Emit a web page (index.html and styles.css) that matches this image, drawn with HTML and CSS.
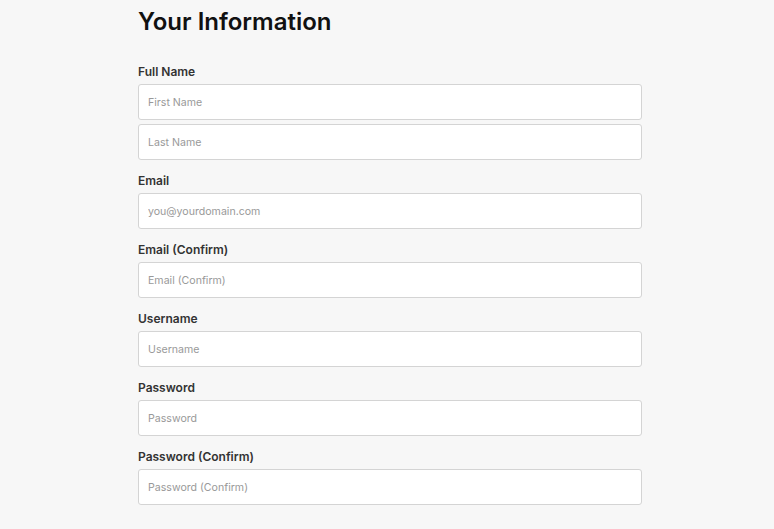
FILE: index.html
```
<!DOCTYPE html>
<html lang="en">
<head>
    <meta charset="UTF-8">
    <meta name="viewport" content="width=device-width, initial-scale=1.0">
    <title>Your Information</title>
    <link rel="stylesheet" href="styles.css">
</head>
<body>
    <div class="container">
        <h1>Your Information</h1>

        <div class="field">
            <label>Full Name</label>
            <input type="text" placeholder="First Name">
            <input type="text" placeholder="Last Name">
        </div>

        <div class="field">
            <label>Email</label>
            <input type="email" placeholder="you@yourdomain.com">
        </div>

        <div class="field">
            <label>Email (Confirm)</label>
            <input type="email" placeholder="Email (Confirm)">
        </div>

        <div class="field">
            <label>Username</label>
            <input type="text" placeholder="Username">
        </div>

        <div class="field">
            <label>Password</label>
            <input type="password" placeholder="Password">
        </div>

        <div class="field">
            <label>Password (Confirm)</label>
            <input type="password" placeholder="Password (Confirm)">
        </div>
    </div>
</body>
</html>
```

FILE: styles.css
```
body {
    margin: 0;
    background: #f7f7f7;
    font-family: Inter, "Noto Sans", sans-serif;
    color: #222;
}
.container {
    width: 504px;
    margin-left: 138px;
    padding-top: 7px;
}
h1 {
    margin: 0 0 26px;
    font-size: 24px;
    line-height: 30px;
    font-weight: 600;
    color: #111;
}
.field {
    display: flex;
    flex-direction: column;
    gap: 4px;
    margin-bottom: 12px;
}
.field label {
    font-size: 12px;
    font-weight: 600;
    line-height: 18px;
    color: #333;
    margin-bottom: -1px;
}
.field input {
    box-sizing: border-box;
    height: 36px;
    padding: 0 9px;
    border: 1px solid #d4d4d4;
    border-radius: 3px;
    background: white;
    font-family: inherit;
    font-size: 10.6px;
    color: #333;
    outline: none;
}
.field input::placeholder {
    color: #999;
}
```
